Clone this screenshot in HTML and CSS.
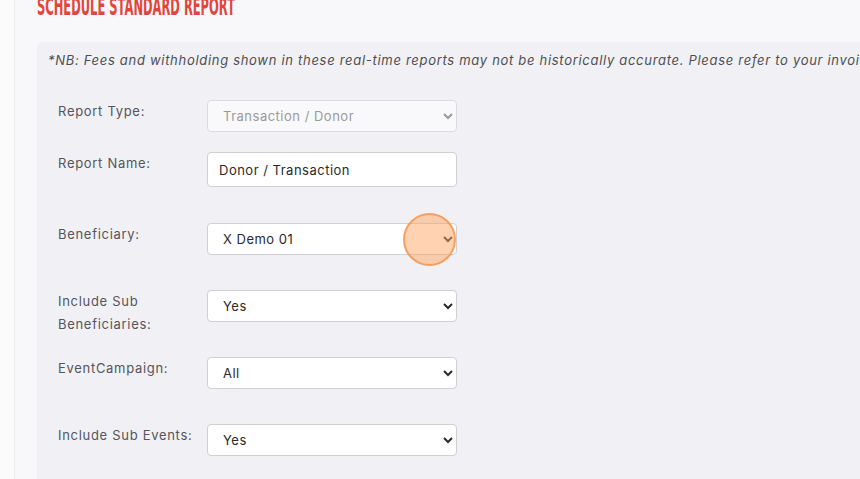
FILE: index.html
```html
<!DOCTYPE html>
<html lang="en">
<head>
  <meta charset="UTF-8">
  <meta name="viewport" content="width=device-width, initial-scale=1.0">
  <title>Schedule Standard Report</title>
  <link rel="stylesheet" href="styles.css">
</head>
<body>
  <div id="rail"></div>
  <main id="page">
    <h1>Schedule Standard Report</h1>

    <div id="panel">
      <p class="note">*NB: Fees and withholding shown in these real-time reports may not be historically accurate. Please refer to your invoices.</p>

      <div class="row r-first">
        <label>Report Type:</label>
        <select disabled><option>Transaction / Donor</option></select>
      </div>
      <div class="row r-name">
        <label>Report Name:</label>
        <input type="text" value="Donor / Transaction">
      </div>
      <div class="row">
        <label>Beneficiary:</label>
        <div class="ctl">
          <select><option>X Demo 01</option></select>
          <span class="click"></span>
        </div>
      </div>
      <div class="row">
        <label>Include Sub Beneficiaries:</label>
        <select><option>Yes</option></select>
      </div>
      <div class="row">
        <label>EventCampaign:</label>
        <select><option>All</option></select>
      </div>
      <div class="row">
        <label>Include Sub Events:</label>
        <select><option>Yes</option></select>
      </div>
    </div>
  </main>
</body>
</html>
```

FILE: styles.css
```css
:root{
  --bg:#f8f8fa;
  --rail:#fbfbfc;
  --panel:#f1f1f5;
  --line:#cfcfd4;
  --red:#e2453a;
  --text:#444;
}
*{box-sizing:border-box;margin:0}
body{
  display:flex;height:100vh;overflow:hidden;
  background:var(--bg);color:var(--text);
  font-family:Inter,"Open Sans",sans-serif;font-size:13px;letter-spacing:.7px;
}
#rail{width:15px;flex:none;background:var(--rail);border-right:1px solid #ececf0}
#page{flex:1;padding-left:22px;min-width:0;overflow:hidden}
h1{
  font-family:"DejaVu Sans",sans-serif;font-weight:700;font-size:25px;letter-spacing:0;
  text-transform:uppercase;color:var(--red);
  line-height:26px;margin-top:-6px;height:48px;
  transform:scaleX(.46);transform-origin:left top;white-space:nowrap;
}
#panel{
  background:var(--panel);border-radius:6px 0 0 0;
  padding:9px 0 30px 11px;height:500px;
}
.note{font-style:italic;white-space:nowrap;color:#4e4e52;margin-bottom:31px;line-height:18px}
.row{display:flex;align-items:flex-start;height:67px}
.row.r-first{height:52px}
.row.r-name{height:71px}
.row label{width:159px;flex:none;padding:0 10px;line-height:23px;color:#55555a}
.ctl{position:relative}
select,input{
  width:250px;height:32px;border:1px solid var(--line);border-radius:4px;
  background:#fff;font:inherit;letter-spacing:.5px;color:#2b2b2b;padding:0 10px 0 11px;
}
input{height:35px}
select:disabled{background:#f9f9fb;color:#999;border-color:#dcdce0;opacity:1}
.click{
  position:absolute;left:196px;top:-10px;width:53px;height:53px;border-radius:50%;
  background:rgba(255,165,100,.5);border:2px solid rgba(246,150,80,.85);
}
```
